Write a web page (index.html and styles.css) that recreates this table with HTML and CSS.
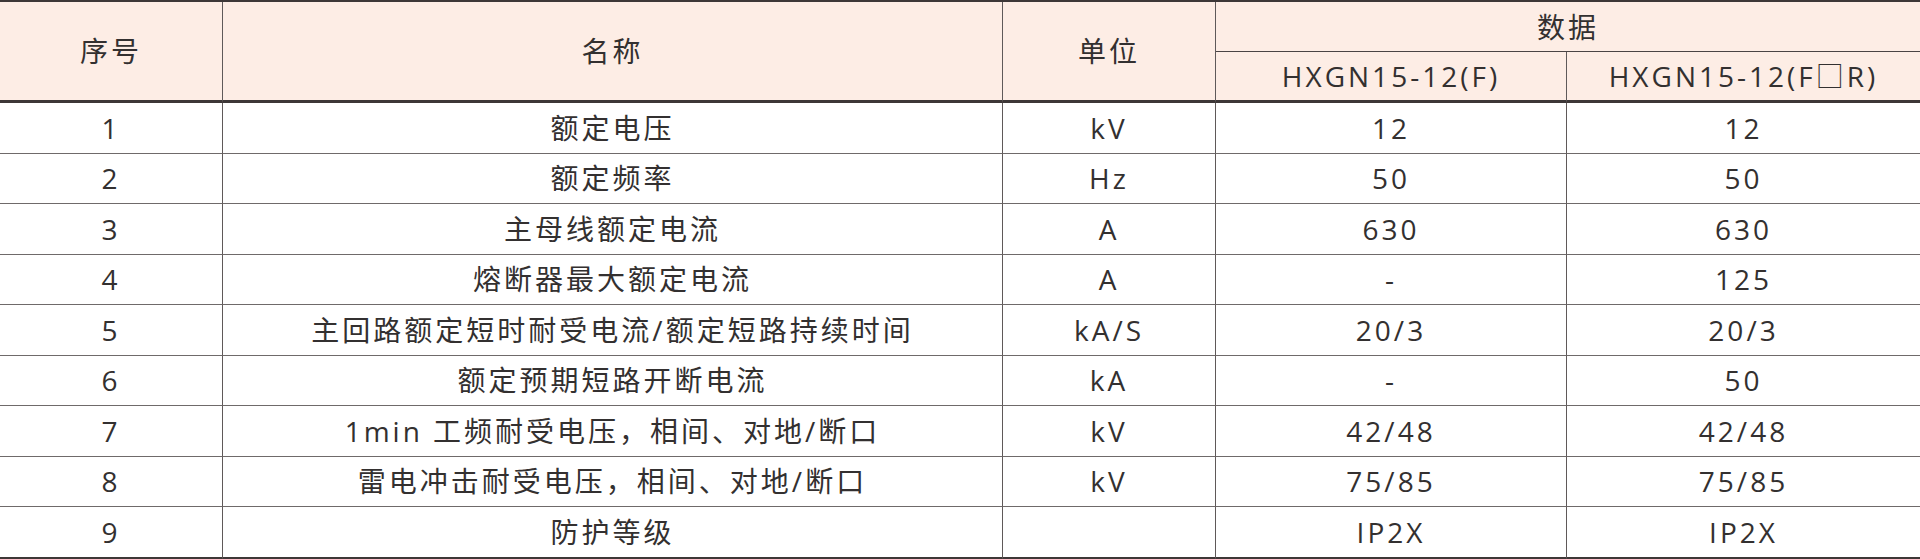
FILE: index.html
```html
<!DOCTYPE html>
<html lang="zh-CN">
<head>
<meta charset="utf-8">
<title>技术参数</title>
<link rel="stylesheet" href="styles.css">
</head>
<body>
<table class="spec">
  <colgroup>
    <col class="c-no">
    <col class="c-name">
    <col class="c-unit">
    <col class="c-d1">
    <col class="c-d2">
  </colgroup>
  <thead>
    <tr class="hd1">
      <th rowspan="2" class="vl hb">序号</th>
      <th rowspan="2" class="vl hb">名称</th>
      <th rowspan="2" class="vl hb">单位</th>
      <th colspan="2" class="sub">数据</th>
    </tr>
    <tr class="hd2">
      <th class="vl hb">HXGN15-12(F)</th>
      <th class="hb">HXGN15-12(F□R)</th>
    </tr>
  </thead>
  <tbody>
    <tr><td class="vl">1</td><td class="vl">额定电压</td><td class="vl">kV</td><td class="vl">12</td><td>12</td></tr>
    <tr><td class="vl">2</td><td class="vl">额定频率</td><td class="vl">Hz</td><td class="vl">50</td><td>50</td></tr>
    <tr><td class="vl">3</td><td class="vl">主母线额定电流</td><td class="vl">A</td><td class="vl">630</td><td>630</td></tr>
    <tr><td class="vl">4</td><td class="vl">熔断器最大额定电流</td><td class="vl">A</td><td class="vl">-</td><td>125</td></tr>
    <tr><td class="vl">5</td><td class="vl">主回路额定短时耐受电流/额定短路持续时间</td><td class="vl">kA/S</td><td class="vl">20/3</td><td>20/3</td></tr>
    <tr><td class="vl">6</td><td class="vl">额定预期短路开断电流</td><td class="vl">kA</td><td class="vl">-</td><td>50</td></tr>
    <tr><td class="vl">7</td><td class="vl">1min 工频耐受电压，相间、对地/断口</td><td class="vl">kV</td><td class="vl">42/48</td><td>42/48</td></tr>
    <tr><td class="vl">8</td><td class="vl">雷电冲击耐受电压，相间、对地/断口</td><td class="vl">kV</td><td class="vl">75/85</td><td>75/85</td></tr>
    <tr class="last"><td class="vl">9</td><td class="vl">防护等级</td><td class="vl"></td><td class="vl">IP2X</td><td>IP2X</td></tr>
  </tbody>
</table>
</body>
</html>
```
FILE: styles.css
```css
html, body {
  margin: 0;
  padding: 0;
  background: #ffffff;
}

.spec {
  width: 1920px;
  table-layout: fixed;
  border-collapse: separate;
  border-spacing: 0;
  border-top: 2px solid #3d3737;
  font-family: "Open Sans", "Noto Sans CJK SC", sans-serif;
  font-size: 28px;
  letter-spacing: 3px;
  color: #333030;
}

.c-no { width: 223px; }
.c-name { width: 780px; }
.c-unit { width: 213px; }
.c-d1 { width: 351px; }
.c-d2 { width: 353px; }

.spec th,
.spec td {
  padding: 0;
  text-align: center;
  vertical-align: middle;
  font-weight: 400;
  line-height: 1;
  white-space: nowrap;
}

.spec thead th {
  background: #fdede5;
}

.hd1 { height: 50px; }
.hd2 { height: 51px; }

.spec th.sub {
  border-bottom: 1px solid #4a4444;
}

.spec th.hb {
  border-bottom: 3px solid #3d3737;
}

.spec .vl {
  border-right: 1px solid #5f5959;
}

.spec tbody tr {
  height: 50.5px;
}

.spec tbody td {
  border-bottom: 1px solid #6f6a6a;
}

.spec tbody tr.last {
  height: 53px;
}

.spec tbody tr.last td {
  border-bottom: 3px solid #3d3737;
}
```
